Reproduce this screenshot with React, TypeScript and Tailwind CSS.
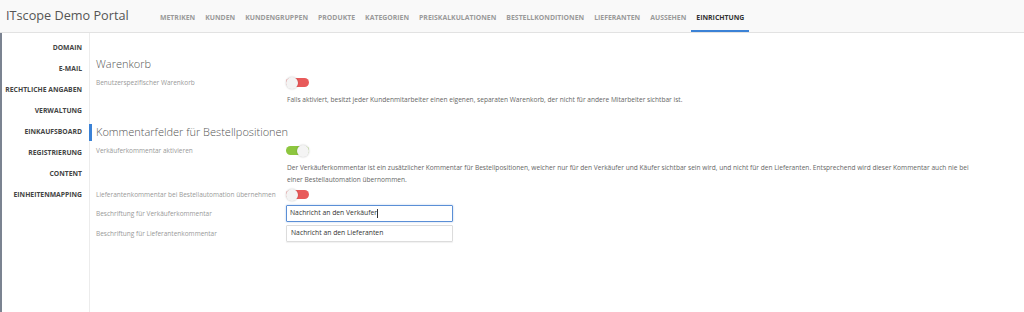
const NAV = [
  "Metriken",
  "Kunden",
  "Kundengruppen",
  "Produkte",
  "Kategorien",
  "Preiskalkulationen",
  "Bestellkonditionen",
  "Lieferanten",
  "Aussehen",
  "Einrichtung",
];

const SIDE = [
  "Domain",
  "E-Mail",
  "Rechtliche Angaben",
  "Verwaltung",
  "Einkaufsboard",
  "Registrierung",
  "Content",
  "Einheitenmapping",
];

function Toggle({ on }: { on: boolean }) {
  return (
    <div
      className={`flex items-center w-[23px] h-[9px] rounded-full ${
        on ? "bg-[#8dc63f] justify-end" : "bg-[#e85a5a] justify-start"
      }`}
    >
      <div className="w-[12px] h-[12px] rounded-full bg-[#f4f4f4] shadow-[0_0_2px_rgba(0,0,0,0.25)]" />
    </div>
  );
}

function Row({ label, children }: { label: string; children: React.ReactNode }) {
  return (
    <div className="flex items-center">
      <div className="w-[190px] shrink-0 text-[6.5px] text-[#999] whitespace-nowrap">{label}</div>
      {children}
    </div>
  );
}

export default function App() {
  return (
    <div className="w-[1024px] h-[312px] bg-white flex flex-col font-['Open_Sans',sans-serif] overflow-hidden">
      {/* Top bar */}
      <header className="h-[33px] shrink-0 flex items-center bg-[#f9f9f9] border-b border-[#e2e2e2]">
        <div className="w-[155px] pl-[6px] text-[12.7px] text-[#555] leading-none pb-[1px]">
          ITscope Demo Portal
        </div>
        <nav className="flex h-full items-stretch">
          {NAV.map((n) => {
            const active = n === "Einrichtung";
            return (
              <div
                key={n}
                className={`flex items-center px-[5px] pt-[6px] text-[6.9px] font-bold uppercase border-b-[2px] ${
                  active ? "text-[#333] border-[#3b82d6]" : "text-[#9a9a9a] border-transparent"
                }`}
              >
                {n}
              </div>
            );
          })}
        </nav>
      </header>

      <div className="flex flex-1 border-l-[2px] border-[#7b8391]">
        {/* Sidebar */}
        <aside className="w-[88px] shrink-0 border-r border-[#ececec] pt-[5px]">
          {SIDE.map((s) => (
            <div
              key={s}
              className="relative h-[21px] flex items-center justify-end pr-[7px] text-[6.8px] font-bold uppercase text-[#444]"
            >
              {s}
              {s === "Einkaufsboard" && (
                <span className="absolute right-[-3px] top-[2px] bottom-[2px] w-[3px] bg-[#3b82d6]" />
              )}
            </div>
          ))}
        </aside>

        {/* Content */}
        <main className="flex-1 pl-[6px] pt-[23px]">
          <h2 className="text-[11px] font-light leading-[16px] text-[#555]">Warenkorb</h2>
          <div className="mt-[6px] h-[12px]">
            <Row label="Benutzerspezifischer Warenkorb">
              <Toggle on={false} />
            </Row>
          </div>
          <p className="mt-[4px] ml-[191px] text-[6.6px] leading-[12px] text-[#666]">
            Falls aktiviert, besitzt jeder Kundenmitarbeiter einen eigenen, separaten Warenkorb, der nicht für
            andere Mitarbeiter sichtbar ist.
          </p>

          <h2 className="mt-[18px] text-[11px] font-light leading-[16px] text-[#555]">
            Kommentarfelder für Bestellpositionen
          </h2>
          <div className="mt-[6px] h-[12px]">
            <Row label="Verkäuferkommentar aktivieren">
              <Toggle on={true} />
            </Row>
          </div>
          <p className="mt-[4px] ml-[191px] w-[690px] text-[6.6px] leading-[12px] text-[#666]">
            Der Verkäuferkommentar ist ein zusätzlicher Kommentar für Bestellpositionen, welcher nur für den
            Verkäufer und Käufer sichtbar sein wird, und nicht für den Lieferanten. Entsprechend wird dieser
            Kommentar auch nie bei einer Bestellautomation übernommen.
          </p>
          <div className="mt-[4px] h-[12px]">
            <Row label="Lieferantenkommentar bei Bestellautomation übernehmen">
              <Toggle on={false} />
            </Row>
          </div>
          <div className="mt-[3px]">
            <Row label="Beschriftung für Verkäuferkommentar">
              <div className="w-[167px] h-[17px] flex items-center px-[3px] border-[1.5px] border-[#5b8fd6] rounded-[1px] text-[6.8px] text-[#333] shadow-[0_0_2px_rgba(91,143,214,0.5)]">
                Nachricht an den Verkäufer
                <span className="w-px h-[9px] bg-[#333]" />
              </div>
            </Row>
          </div>
          <div className="mt-[3px]">
            <Row label="Beschriftung für Lieferantenkommentar">
              <div className="w-[167px] h-[17px] flex items-center px-[4px] border border-[#dcdcdc] rounded-[1px] text-[6.8px] text-[#333] shadow-[0_1px_1px_rgba(0,0,0,0.06)]">
                Nachricht an den Lieferanten
              </div>
            </Row>
          </div>
        </main>
      </div>
    </div>
  );
}
